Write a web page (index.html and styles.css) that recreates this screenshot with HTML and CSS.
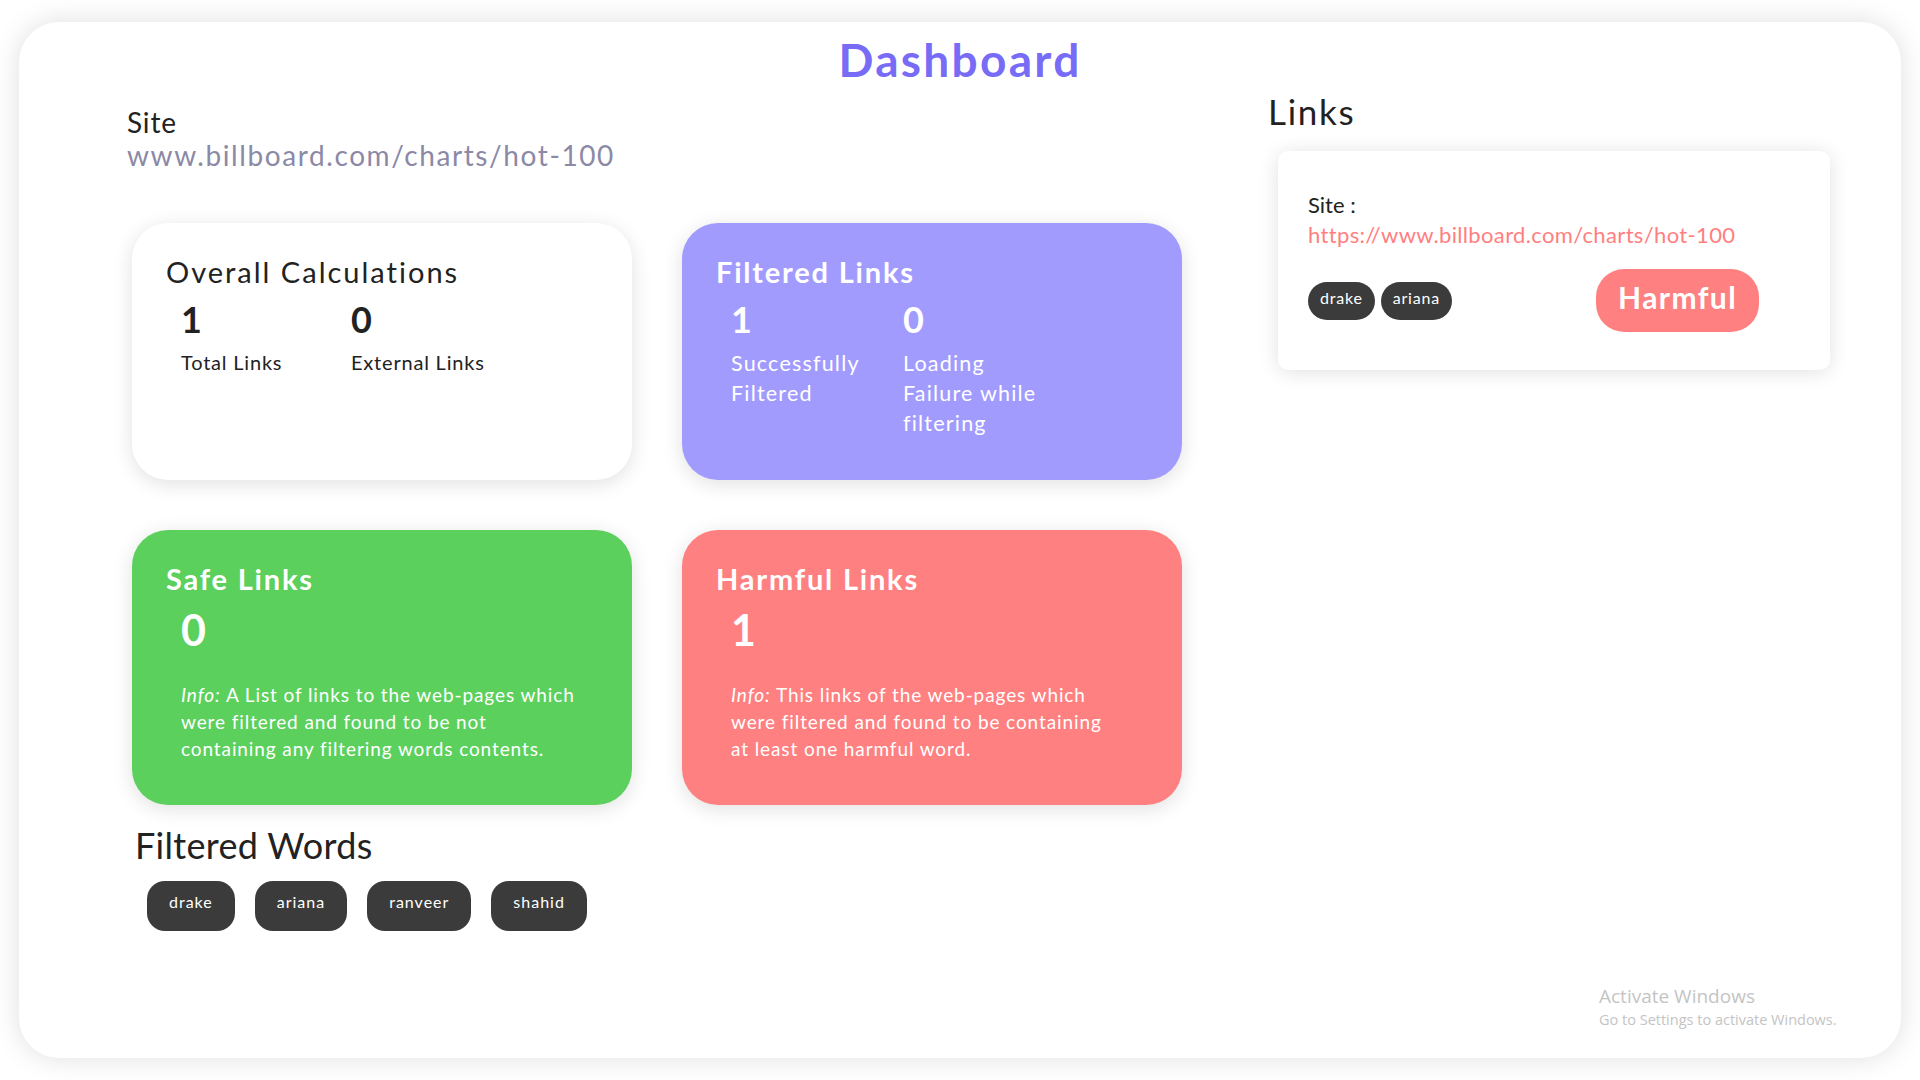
FILE: index.html
```html
<!DOCTYPE html>
<html lang="en">
<head>
<meta charset="utf-8">
<title>Dashboard</title>
<link rel="stylesheet" href="styles.css">
</head>
<body>
<div class="frame">
  <h1 class="title">Dashboard</h1>
  <div class="main">
    <section class="left">
      <div class="site-label">Site</div>
      <div class="site-url">www.billboard.com/charts/hot-100</div>
      <div class="cards">
        <div class="card card-white">
          <h3 class="card-title">Overall Calculations</h3>
          <div class="stats">
            <div class="stat">
              <div class="stat-num">1</div>
              <div class="stat-label">Total Links</div>
            </div>
            <div class="stat">
              <div class="stat-num">0</div>
              <div class="stat-label">External Links</div>
            </div>
          </div>
        </div>
        <div class="card card-purple">
          <h3 class="card-title bold">Filtered Links</h3>
          <div class="stats">
            <div class="stat">
              <div class="stat-num">1</div>
              <div class="stat-label">Successfully<br>Filtered</div>
            </div>
            <div class="stat">
              <div class="stat-num">0</div>
              <div class="stat-label">Loading<br>Failure while<br>filtering</div>
            </div>
          </div>
        </div>
        <div class="card card-green">
          <h3 class="card-title bold">Safe Links</h3>
          <div class="big-num">0</div>
          <p class="info"><em>Info:</em> A List of links to the web-pages which<br>were filtered and found to be not<br>containing any filtering words contents.</p>
        </div>
        <div class="card card-red">
          <h3 class="card-title bold">Harmful Links</h3>
          <div class="big-num">1</div>
          <p class="info"><em>Info:</em> This links of the web-pages which<br>were filtered and found to be containing<br>at least one harmful word.</p>
        </div>
      </div>
      <h2 class="words-title">Filtered Words</h2>
      <div class="words">
        <span class="word">drake</span>
        <span class="word">ariana</span>
        <span class="word">ranveer</span>
        <span class="word">shahid</span>
      </div>
    </section>
    <section class="right">
      <h2 class="links-title">Links</h2>
      <div class="link-card">
        <div class="lc-label">Site :</div>
        <div class="lc-url">https://www.billboard.com/charts/hot-100</div>
        <div class="lc-row">
          <span class="tag">drake</span>
          <span class="tag">ariana</span>
          <span class="verdict">Harmful</span>
        </div>
      </div>
    </section>
  </div>
  <div class="watermark">
    <div class="wm-title">Activate Windows</div>
    <div class="wm-sub">Go to Settings to activate Windows.</div>
  </div>
</div>
</body>
</html>
```
FILE: styles.css
```css
* { box-sizing: border-box; }
html, body {
  margin: 0;
  padding: 0;
  background: #ffffff;
  height: 1080px;
  overflow: hidden;
}
body {
  font-family: "Lato", "Noto Sans", sans-serif;
  color: #222222;
}
.frame {
  position: relative;
  margin: 22px 19px 0;
  height: 1036px;
  border-radius: 40px;
  background: #ffffff;
  box-shadow: 0 0 28px rgba(0, 0, 0, 0.13);
  padding-top: 8px;
}
.title {
  margin: 0;
  text-align: center;
  font-size: 46px;
  line-height: 60px;
  font-weight: 700;
  letter-spacing: 2.3px;
  color: #786cf7;
}
.main {
  display: grid;
  grid-template-columns: 1141px 1fr;
  padding-left: 108px;
}
.left { padding-top: 17px; }
.right { padding-top: 1px; }

.site-label {
  font-size: 28px;
  line-height: 30px;
  letter-spacing: 0.8px;
}
.site-url {
  margin-top: 2px;
  font-size: 28px;
  line-height: 32px;
  letter-spacing: 1.6px;
  color: #8b89a6;
}
.cards {
  display: grid;
  grid-template-columns: 500px 500px;
  grid-template-rows: 257px 275px;
  column-gap: 50px;
  row-gap: 50px;
  margin: 52px 0 0 5px;
}
.card {
  border-radius: 36px;
  padding: 31px 34px;
  box-shadow: 0 4px 20px rgba(0, 0, 0, 0.12);
}
.card-white { background: #ffffff; color: #222222; }
.card-purple { background: #a29bfe; color: #ffffff; }
.card-green { background: #5bd05d; color: #ffffff; }
.card-red { background: #ff8080; color: #ffffff; }
.card-title {
  margin: 0;
  font-size: 29px;
  line-height: 36px;
  font-weight: 400;
  letter-spacing: 2px;
}
.card-title.bold {
  font-weight: 700;
  letter-spacing: 1.8px;
}
.stats {
  display: grid;
  grid-template-columns: 170px 170px;
  margin-top: 7px;
  padding-left: 15px;
}
.card-purple .stats { grid-template-columns: 172px 172px; }
.stat-num {
  font-size: 36px;
  line-height: 44px;
  font-weight: 700;
}
.stat-label {
  margin-top: 6px;
  font-size: 20px;
  line-height: 30px;
  letter-spacing: 0.8px;
}
.card-purple .stat-label {
  margin-top: 7px;
  font-size: 21.5px;
  letter-spacing: 1.2px;
}
.big-num {
  margin-top: 8px;
  padding-left: 15px;
  font-size: 43px;
  line-height: 50px;
  font-weight: 700;
}
.info {
  margin: 26px 0 0;
  padding-left: 15px;
  font-size: 19px;
  line-height: 27px;
  letter-spacing: 0.9px;
}
.words-title {
  margin: 18px 0 0 8px;
  font-size: 36px;
  line-height: 44px;
  font-weight: 400;
  letter-spacing: 0.3px;
}
.words {
  display: flex;
  gap: 20px;
  margin: 14px 0 0 20px;
}
.word {
  height: 50px;
  padding: 9px 22px 17px;
  line-height: 24px;
  font-size: 16px;
  letter-spacing: 1px;
  border-radius: 18px;
  background: #3b3b3b;
  color: #ffffff;
}
.links-title {
  margin: 0;
  font-size: 35px;
  line-height: 40px;
  font-weight: 400;
  letter-spacing: 1.7px;
}
.link-card {
  margin: 20px 0 0 10px;
  width: 552px;
  height: 219px;
  padding: 39px 30px 0;
  border-radius: 10px;
  background: #ffffff;
  box-shadow: 0 2px 20px rgba(0, 0, 0, 0.12);
}
.lc-label {
  font-size: 22px;
  line-height: 29px;
}
.lc-url {
  margin-top: 1px;
  font-size: 22px;
  line-height: 29px;
  letter-spacing: 0.35px;
  color: #ff7f7f;
}
.lc-row {
  display: flex;
  align-items: center;
  height: 63px;
  margin-top: 20px;
}
.tag {
  height: 38px;
  line-height: 32px;
  padding: 0 12px 6px;
  margin-right: 6px;
  border-radius: 19px;
  font-size: 16px;
  letter-spacing: 0.8px;
  background: #3b3b3b;
  color: #ffffff;
}
.verdict {
  margin-left: auto;
  margin-right: 41px;
  height: 63px;
  line-height: 57px;
  padding: 0 22px 6px;
  border-radius: 28px;
  font-size: 30px;
  font-weight: 700;
  letter-spacing: 1.4px;
  background: #ff8080;
  color: #ffffff;
}
.watermark {
  position: absolute;
  left: 1580px;
  top: 962px;
  font-family: "Open Sans", "Noto Sans", sans-serif;
  color: #c4c4c4;
}
.wm-title {
  font-size: 19px;
  line-height: 24px;
}
.wm-sub {
  margin-top: 2px;
  font-size: 14.5px;
  line-height: 20px;
}
```
